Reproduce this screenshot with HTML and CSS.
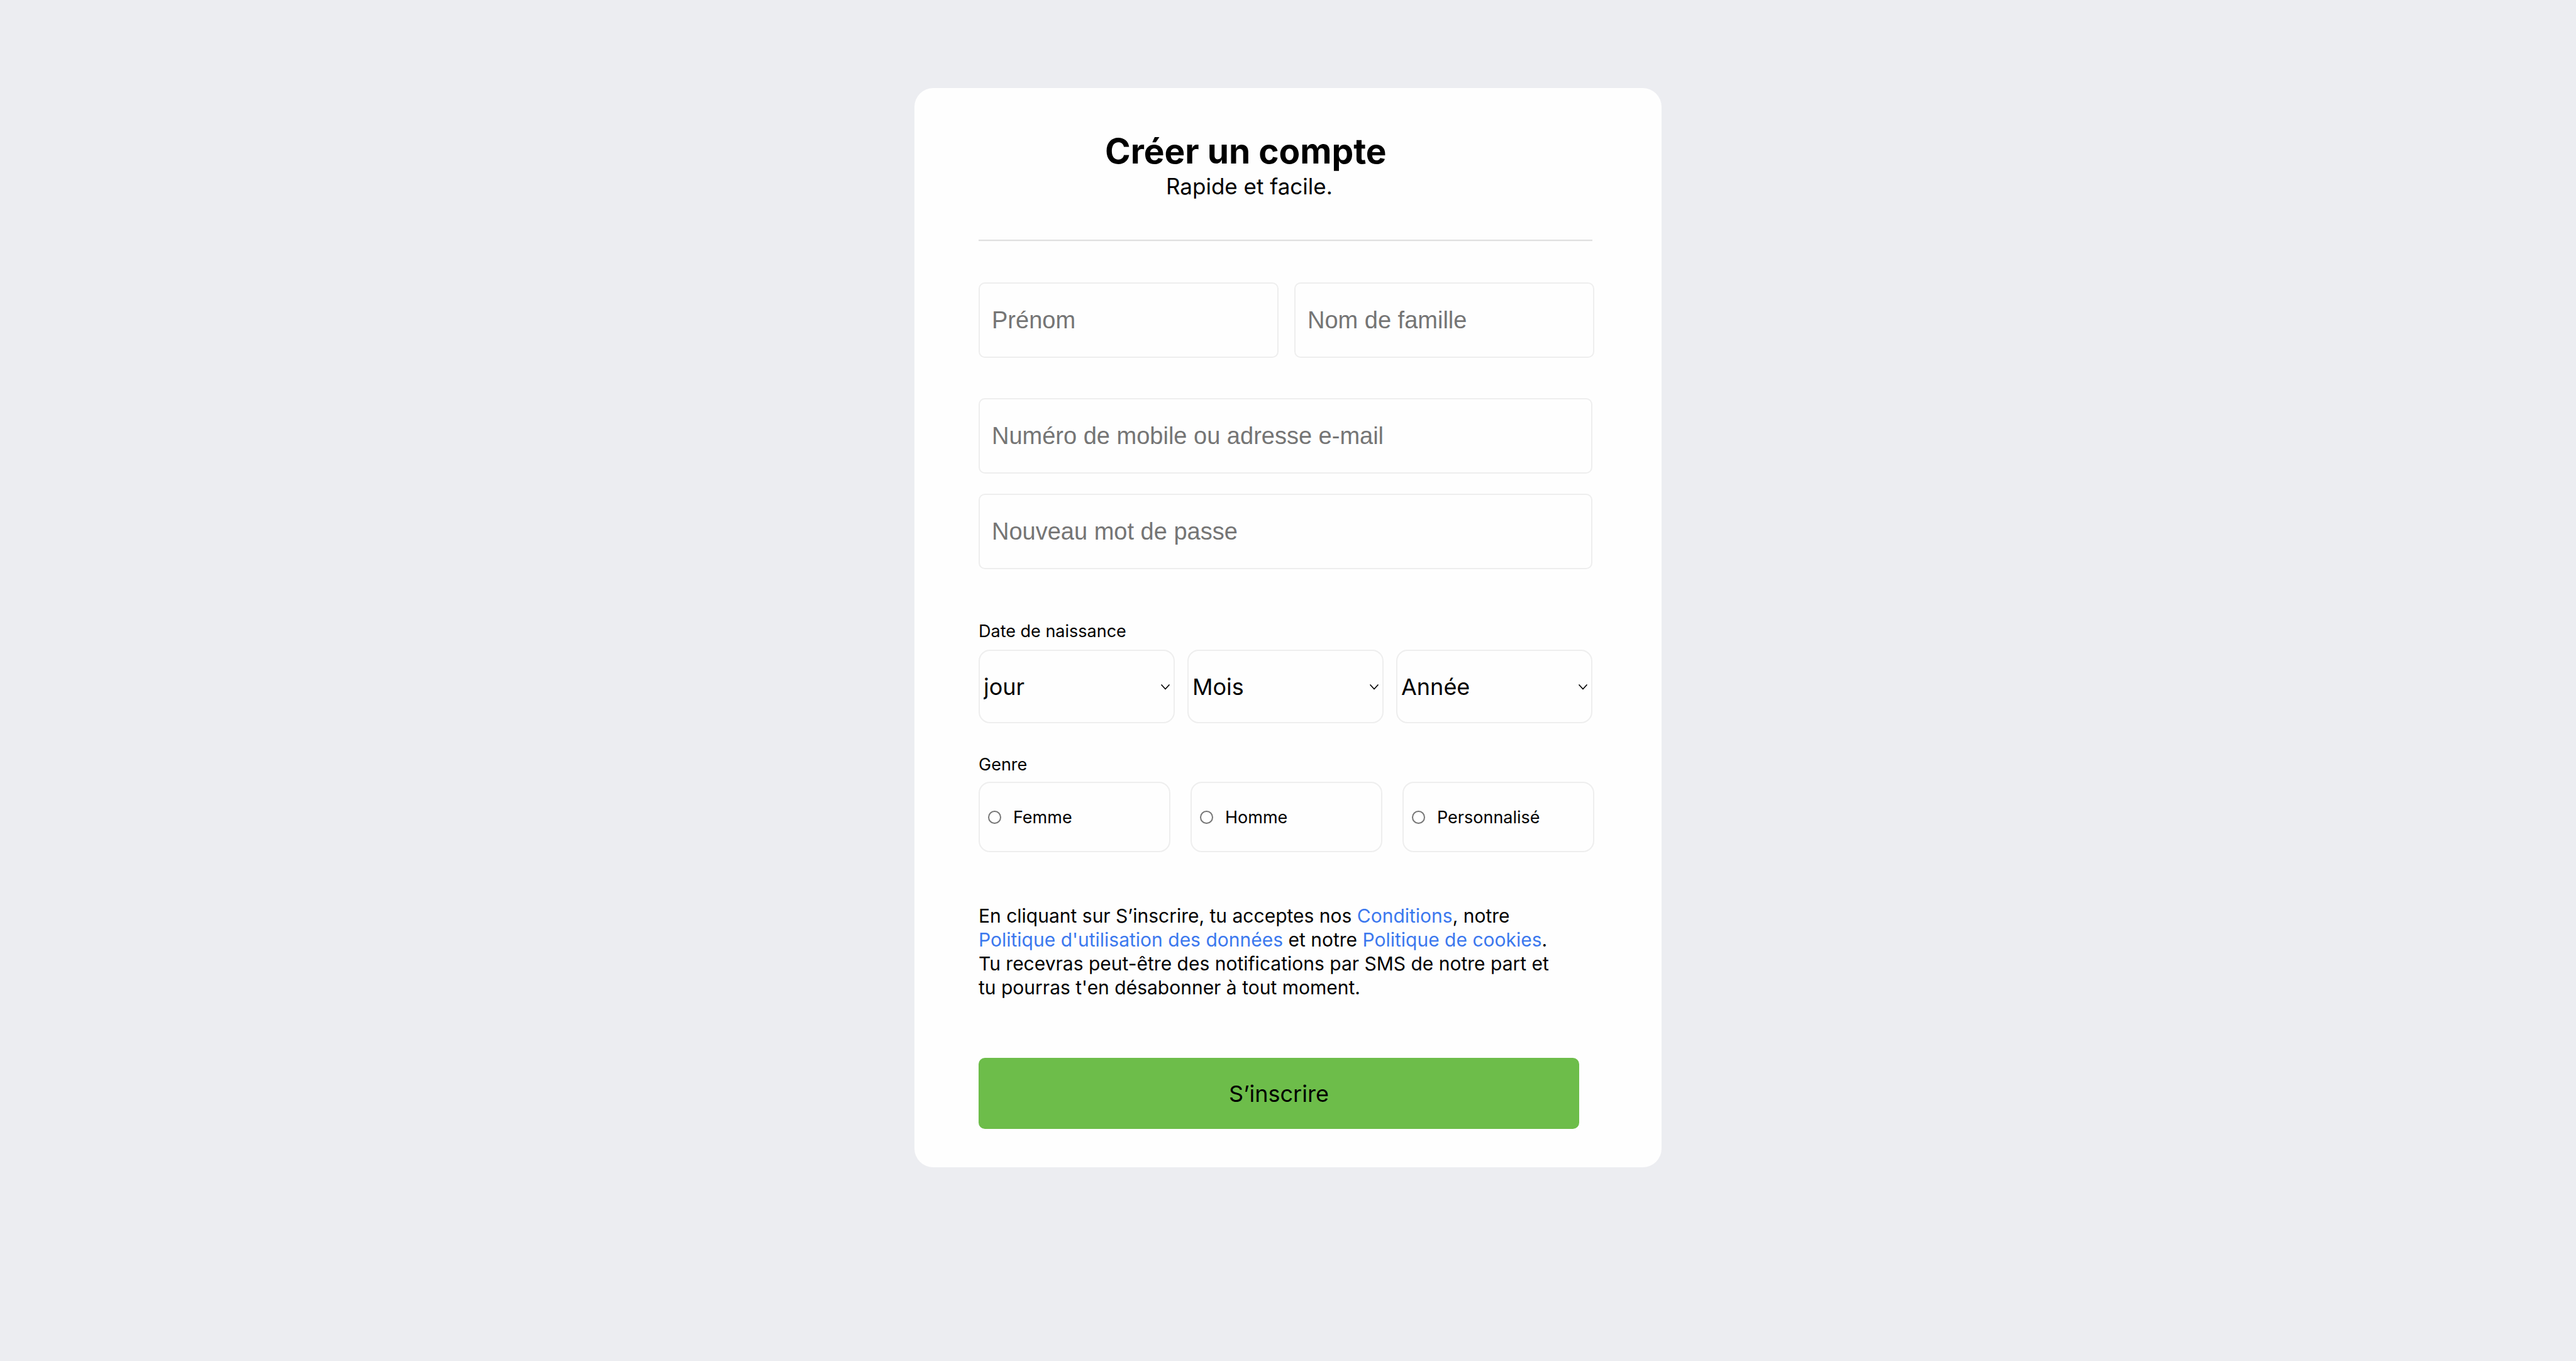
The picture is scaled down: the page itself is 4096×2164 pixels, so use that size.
FILE: index.html
```html
<!DOCTYPE html>
<html lang="fr">
<head>
  <meta charset="utf-8">
  <meta name="viewport" content="width=device-width, initial-scale=1">
  <title>Créer un compte</title>
  <link rel="stylesheet" href="styles.css">
</head>
<body>
  <main class="card">
    <header class="card-header">
      <h1 class="title">Créer un compte</h1>
      <p class="subtitle">Rapide et facile.</p>
    </header>
    <hr class="divider">
    <form class="form">
      <div class="names">
        <input class="field" type="text" name="prenom" placeholder="Prénom" aria-label="Prénom">
        <input class="field" type="text" name="nom" placeholder="Nom de famille" aria-label="Nom de famille">
      </div>
      <div class="credentials">
        <input class="field" type="text" name="contact" placeholder="Numéro de mobile ou adresse e-mail" aria-label="Numéro de mobile ou adresse e-mail">
        <input class="field" type="password" name="passe" placeholder="Nouveau mot de passe" aria-label="Nouveau mot de passe">
      </div>

      <div class="group birth" role="group" aria-labelledby="birth-label">
        <p class="group-label" id="birth-label">Date de naissance</p>
        <div class="selects">
          <div class="select-box">
            <select class="select" name="jour" aria-label="Jour"><option>jour</option></select>
            <svg class="chevron" viewBox="0 0 16 10" aria-hidden="true"><path d="M1.5 1.5 8 8.5 14.5 1.5"/></svg>
          </div>
          <div class="select-box">
            <select class="select" name="mois" aria-label="Mois"><option>Mois</option></select>
            <svg class="chevron" viewBox="0 0 16 10" aria-hidden="true"><path d="M1.5 1.5 8 8.5 14.5 1.5"/></svg>
          </div>
          <div class="select-box">
            <select class="select" name="annee" aria-label="Année"><option>Année</option></select>
            <svg class="chevron" viewBox="0 0 16 10" aria-hidden="true"><path d="M1.5 1.5 8 8.5 14.5 1.5"/></svg>
          </div>
        </div>
      </div>

      <div class="group gender" role="radiogroup" aria-labelledby="gender-label">
        <p class="group-label" id="gender-label">Genre</p>
        <div class="choices">
          <label class="choice"><input class="radio" type="radio" name="genre" value="f">Femme</label>
          <label class="choice"><input class="radio" type="radio" name="genre" value="h">Homme</label>
          <label class="choice"><input class="radio" type="radio" name="genre" value="p">Personnalisé</label>
        </div>
      </div>

      <p class="terms">En cliquant sur S’inscrire, tu acceptes nos <a href="#conditions">Conditions</a>, notre <a href="#donnees">Politique d'utilisation des données</a> et notre <a href="#cookies">Politique de cookies</a>. Tu recevras peut-être des notifications par SMS de notre part et tu pourras t'en désabonner à tout moment.</p>

      <button class="submit" type="submit">S’inscrire</button>
    </form>
  </main>
</body>
</html>
```

FILE: styles.css
```css
* {
  box-sizing: border-box;
}

body {
  margin: 0;
  padding: 140px 24px;
  background: #ecedf1;
  color: #000;
  font-family: Inter, "Liberation Sans", sans-serif;
}

.card {
  max-width: 1188px;
  margin: 0 auto;
  padding: 67px 110px 61px 102px;
  border-radius: 30px;
  background: #fefefe;
}

.card-header {
  padding-left: 201px;
}

.title {
  margin: 0;
  font-size: 55px;
  font-weight: 700;
  line-height: 66px;
}

.subtitle {
  margin: 0;
  padding-left: 97px;
  font-size: 35px;
  line-height: 46px;
}

.divider {
  margin: 62px 0 65px;
  border: 0;
  border-top: 2px solid #dfdfdf;
  border-bottom: 1px solid #f6f6f6;
}

.field,
.select,
.choice {
  border: 2px solid #eee;
  background: #fefefe;
}

.field {
  width: 100%;
  min-width: 0;
  height: 120px;
  padding: 0 19px;
  border-radius: 10px;
  color: #000;
  font: 38px "Liberation Sans", Arial, sans-serif;
}

.field::placeholder {
  color: #757575;
  opacity: 1;
}

/* Name and gender rows reach slightly past the other rows. */
.names,
.choices {
  display: grid;
  margin-right: -3px;
}

.names {
  grid-template-columns: repeat(2, 1fr);
  gap: 25px;
  margin-bottom: 64px;
}

.credentials {
  display: grid;
  gap: 32px;
}

.group-label {
  margin: 0;
  font-size: 27px;
  line-height: 34px;
}

.birth {
  margin-top: 82px;
}

.gender {
  margin-top: 49px;
}

.selects {
  display: grid;
  grid-template-columns: repeat(3, 1fr);
  gap: 20px;
  margin-top: 12px;
}

.select-box {
  display: grid;
  align-items: center;
}

.select,
.chevron {
  grid-area: 1 / 1;
}

.select {
  width: 100%;
  height: 117px;
  padding: 0 32px 0 6px;
  border-radius: 18px;
  appearance: none;
  color: #000;
  font: 36px Inter, "Liberation Sans", sans-serif;
}

.chevron {
  justify-self: end;
  width: 16px;
  height: 10px;
  margin-right: 7px;
  fill: none;
  stroke: #000;
  stroke-width: 1.6;
  pointer-events: none;
}

.choices {
  grid-template-columns: repeat(3, 1fr);
  gap: 32px;
  margin-top: 10px;
}

.choice {
  display: flex;
  align-items: center;
  gap: 19px;
  height: 112px;
  padding: 0 13px;
  border-radius: 18px;
  font-size: 27px;
}

.radio {
  flex: none;
  width: 21px;
  height: 21px;
  margin: 0;
  border: 2px solid #767676;
  border-radius: 50%;
  appearance: none;
  background: #fff;
}

.radio:checked {
  border-width: 6px;
}

.terms {
  max-width: 920px;
  margin: 82px 0 93px;
  font-size: 30px;
  line-height: 38px;
}

.terms a {
  color: #3b78ee;
  text-decoration: none;
}

.submit {
  display: block;
  width: calc(100% - 21px);
  height: 113px;
  border: 0;
  border-radius: 10px;
  background: #6dbd4a;
  color: #000;
  font: 36px Inter, "Liberation Sans", sans-serif;
}
```
